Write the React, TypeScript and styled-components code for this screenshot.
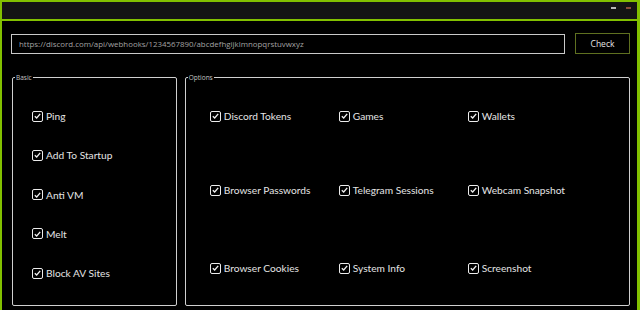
import styled, { createGlobalStyle } from 'styled-components';

const Global = createGlobalStyle`
  html, body {
    margin: 0;
    padding: 0;
    background: #000;
  }
  * {
    box-sizing: border-box;
  }
`;

const Window = styled.div`
  width: 640px;
  height: 310px;
  border: 2px solid #82c000;
  border-bottom: 0;
  border-right-width: 3px;
  background: #000;
  display: flex;
  flex-direction: column;
  font-family: Lato, 'Noto Sans', sans-serif;
  color: #e8e8e8;
  overflow: hidden;
`;

const TitleBar = styled.div`
  height: 19px;
  background: #141414;
  border-bottom: 2px solid #82c000;
  display: flex;
  justify-content: flex-end;
  align-items: flex-start;
  gap: 10px;
  padding: 5px 6px 0 0;
`;

const TitleMark = styled.span<{ $tone: string }>`
  width: 5px;
  height: 2px;
  background: ${(p) => p.$tone};
`;

const Body = styled.div`
  flex: 1;
  padding: 12px 7px 0 9px;
  display: flex;
  flex-direction: column;
`;

const UrlRow = styled.div`
  display: flex;
  align-items: center;
  gap: 10px;
`;

const UrlInput = styled.div`
  flex: 1;
  height: 20px;
  border: 1px solid #c9c9c9;
  padding-left: 7px;
  display: flex;
  align-items: center;
  font-family: 'Open Sans', sans-serif;
  font-size: 7.9px;
  color: #a2a2a2;
`;

const CheckButton = styled.button`
  width: 55px;
  height: 21px;
  background: #000;
  border: 1px solid #5f7020;
  color: #e6e6e6;
  font-family: 'Open Sans', sans-serif;
  font-size: 8.5px;
  padding: 0;
`;

const Groups = styled.div`
  display: flex;
  gap: 8px;
  margin-top: 20px;
  padding-left: 1px;
`;

const GroupBox = styled.fieldset<{ $width: number }>`
  width: ${(p) => p.$width}px;
  height: 232px;
  margin: 0;
  border: 1px solid #d0d0d0;
  border-radius: 2px;
  padding: 0;
`;

const GroupLabel = styled.legend`
  font-family: 'Open Sans', sans-serif;
  font-size: 6.5px;
  color: #c4c4c4;
  padding: 0 1px;
  margin-left: 2px;
  line-height: 7px;
`;

const BasicList = styled.div`
  display: flex;
  flex-direction: column;
  gap: 27.3px;
  padding: 29px 0 0 19px;
`;

const OptionGrid = styled.div`
  display: grid;
  grid-template-columns: 129px 129px 129px;
  grid-template-rows: 74px 78px 12px;
  padding: 29px 0 0 24px;
`;

const Item = styled.label`
  display: flex;
  align-items: center;
  gap: 3px;
  height: 12px;
  font-size: 10.2px;
  color: #e4e4e4;
  white-space: nowrap;
`;

const Box = styled.span`
  width: 11px;
  height: 11px;
  border: 1.3px solid #ececec;
  border-radius: 2px;
  display: flex;
  align-items: center;
  justify-content: center;
  flex-shrink: 0;
`;

const Tick = () => (
  <svg width="7" height="6" viewBox="0 0 7 6">
    <path d="M0.8 3.2 L2.7 5 L6.2 0.8" fill="none" stroke="#f0f0f0" strokeWidth="1.3" />
  </svg>
);

const Option = ({ text }: { text: string }) => (
  <Item>
    <Box>
      <Tick />
    </Box>
    {text}
  </Item>
);

const basic = ['Ping', 'Add To Startup', 'Anti VM', 'Melt', 'Block AV Sites'];
const options = [
  'Discord Tokens',
  'Games',
  'Wallets',
  'Browser Passwords',
  'Telegram Sessions',
  'Webcam Snapshot',
  'Browser Cookies',
  'System Info',
  'Screenshot',
];

export default function App() {
  return (
    <>
      <Global />
      <Window>
        <TitleBar>
          <TitleMark $tone="#b8b8b8" />
          <TitleMark $tone="#8a4a3a" />
        </TitleBar>
        <Body>
          <UrlRow>
            <UrlInput>https://discord.com/api/webhooks/1234567890/abcdefhgijklmnopqrstuvwxyz</UrlInput>
            <CheckButton>Check</CheckButton>
          </UrlRow>
          <Groups>
            <GroupBox $width={165}>
              <GroupLabel>Basic</GroupLabel>
              <BasicList>
                {basic.map((b) => (
                  <Option key={b} text={b} />
                ))}
              </BasicList>
            </GroupBox>
            <GroupBox $width={446}>
              <GroupLabel>Options</GroupLabel>
              <OptionGrid>
                {options.map((o) => (
                  <Option key={o} text={o} />
                ))}
              </OptionGrid>
            </GroupBox>
          </Groups>
        </Body>
      </Window>
    </>
  );
}
